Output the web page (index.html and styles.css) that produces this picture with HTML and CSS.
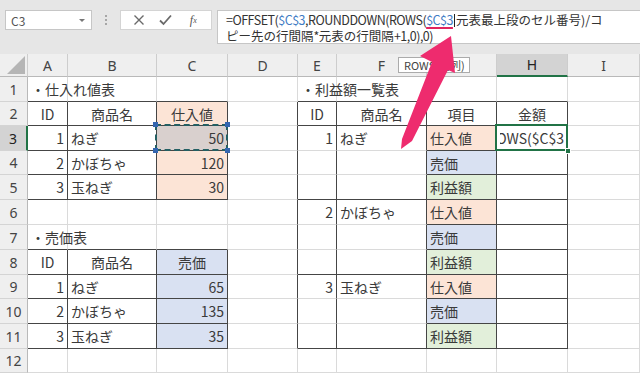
FILE: index.html
```html
<!DOCTYPE html>
<html lang="ja">
<head>
<meta charset="utf-8">
<title>Excel OFFSET</title>
<link rel="stylesheet" href="styles.css">
</head>
<body>
<div class="toolbar">
  <div class="namebox"><span>C3</span><span class="caret"></span></div>
  <div class="vdots"><i></i><i></i><i></i></div>
  <div class="fxbtns">
    <span class="btn">
      <svg width="12" height="12" viewBox="0 0 12 12"><path d="M1.5 1.5 L10.5 10.5 M10.5 1.5 L1.5 10.5" stroke="#6a6a6a" stroke-width="1.4" fill="none"/></svg>
    </span>
    <span class="btn">
      <svg width="13" height="12" viewBox="0 0 13 12"><path d="M1 6.5 L4.5 10 L12 1.5" stroke="#6a6a6a" stroke-width="1.8" fill="none"/></svg>
    </span>
    <span class="btn fx">f<sub>x</sub></span>
  </div>
  <div class="formula"><span class="lat">=OFFSET(<span class="ref">$C$3</span>,ROUNDDOWN(ROWS(<span class="ref uline">$C$3</span></span><span class="cursor"></span>元表最上段のセル番号)/コ<br>ピー先の行間隔<span class="lat">*</span>元表の行間隔<span class="lat">+1,0),0)</span></div>
</div>

<div class="sheet">
  <div class="ch corner"><span class="tri"></span></div>
  <div class="ch">A</div><div class="ch">B</div><div class="ch">C</div><div class="ch">D</div><div class="ch">E</div><div class="ch">F</div><div class="ch">G</div><div class="ch sel">H</div><div class="ch">I</div>

  <div class="rh">1</div>
  <div class="c db">・仕入れ値表</div><div class="c db"></div><div class="c db"></div><div class="c"></div>
  <div class="c db">・利益額一覧表</div><div class="c db"></div><div class="c db"></div><div class="c db"></div><div class="c"></div>

  <div class="rh">2</div>
  <div class="c ctr dr db">ID</div><div class="c ctr dr db">商品名</div><div class="c ctr or dr db">仕入値</div><div class="c dr"></div>
  <div class="c ctr dr db">ID</div><div class="c ctr dr db">商品名</div><div class="c ctr dr db">項目</div><div class="c ctr dr db">金額</div><div class="c"></div>

  <div class="rh selr">3</div>
  <div class="c r dr db">1</div><div class="c dr db">ねぎ</div>
  <div class="c r dr db copy">50<span class="h tl"></span><span class="h tr"></span><span class="h bl2"></span><span class="h br"></span></div>
  <div class="c dr"></div>
  <div class="c r dr">1</div><div class="c dr">ねぎ</div><div class="c or dr db">仕入値</div>
  <div class="c dr db active"><span class="clip">ROUNDDOWN(ROWS($C$3</span><span class="fill"></span></div><div class="c"></div>

  <div class="rh">4</div>
  <div class="c r dr db">2</div><div class="c dr db">かぼちゃ</div><div class="c r or dr db">120</div><div class="c dr"></div>
  <div class="c dr"></div><div class="c dr"></div><div class="c bl dr db">売価</div><div class="c dr db"></div><div class="c"></div>

  <div class="rh">5</div>
  <div class="c r dr db">3</div><div class="c dr db">玉ねぎ</div><div class="c r or dr db">30</div><div class="c dr"></div>
  <div class="c dr db"></div><div class="c dr db"></div><div class="c gr dr db">利益額</div><div class="c dr db"></div><div class="c"></div>

  <div class="rh">6</div>
  <div class="c"></div><div class="c"></div><div class="c"></div><div class="c dr"></div>
  <div class="c r dr">2</div><div class="c dr">かぼちゃ</div><div class="c or dr db">仕入値</div><div class="c dr db"></div><div class="c"></div>

  <div class="rh">7</div>
  <div class="c db">・売価表</div><div class="c db"></div><div class="c db"></div><div class="c dr"></div>
  <div class="c dr"></div><div class="c dr"></div><div class="c bl dr db">売価</div><div class="c dr db"></div><div class="c"></div>

  <div class="rh">8</div>
  <div class="c ctr dr db">ID</div><div class="c ctr dr db">商品名</div><div class="c ctr bl dr db">売価</div><div class="c dr"></div>
  <div class="c dr db"></div><div class="c dr db"></div><div class="c gr dr db">利益額</div><div class="c dr db"></div><div class="c"></div>

  <div class="rh">9</div>
  <div class="c r dr db">1</div><div class="c dr db">ねぎ</div><div class="c r bl dr db">65</div><div class="c dr"></div>
  <div class="c r dr">3</div><div class="c dr">玉ねぎ</div><div class="c or dr db">仕入値</div><div class="c dr db"></div><div class="c"></div>

  <div class="rh">10</div>
  <div class="c r dr db">2</div><div class="c dr db">かぼちゃ</div><div class="c r bl dr db">135</div><div class="c dr"></div>
  <div class="c dr"></div><div class="c dr"></div><div class="c bl dr db">売価</div><div class="c dr db"></div><div class="c"></div>

  <div class="rh">11</div>
  <div class="c r dr db">3</div><div class="c dr db">玉ねぎ</div><div class="c r bl dr db">35</div><div class="c dr"></div>
  <div class="c dr db"></div><div class="c dr db"></div><div class="c gr dr db">利益額</div><div class="c dr db"></div><div class="c"></div>

  <div class="rh">12</div>
  <div class="c"></div><div class="c"></div><div class="c"></div><div class="c"></div>
  <div class="c"></div><div class="c"></div><div class="c"></div><div class="c"></div><div class="c"></div>
</div>

<div class="tooltip">ROWS(配列)</div>

<svg class="arrow" width="640" height="373" viewBox="0 0 640 373">
  <polygon points="451,36 455,73 448,70 412,141 401,149 402,139 432,62 420,56" fill="#ee2b6e"/>
</svg>
</body>
</html>
```

FILE: styles.css
```css
* { box-sizing: border-box; margin: 0; padding: 0; }
html, body { width: 640px; height: 373px; overflow: hidden; }
body {
  background: #e6e6e6;
  font-family: "Noto Sans CJK JP", "Noto Sans", sans-serif;
  color: #333;
  position: relative;
}

/* formula toolbar */
.toolbar {
  height: 54px;
  display: flex;
  align-items: flex-start;
  padding: 10px 0 0 5px;
}
.namebox {
  width: 87px;
  height: 20px;
  background: #fff;
  border: 1px solid #c6c6c6;
  display: flex;
  align-items: center;
  justify-content: space-between;
  padding: 0 6px 0 5px;
  font-size: 12px;
  color: #555;
}
.caret {
  width: 0; height: 0;
  border-left: 3px solid transparent;
  border-right: 3px solid transparent;
  border-top: 3px solid #777;
}
.vdots {
  width: 28px;
  height: 20px;
  display: flex;
  flex-direction: column;
  align-items: center;
  justify-content: center;
  gap: 2px;
}
.vdots i { width: 2px; height: 2px; background: #a6a6a6; display: block; }
.fxbtns {
  width: 92px;
  height: 20px;
  background: #fff;
  border: 1px solid #d4d4d4;
  display: flex;
  align-items: center;
  justify-content: space-around;
  padding: 0 4px;
}
.btn { display: flex; align-items: center; justify-content: center; width: 24px; }
.fx { font-family: "Liberation Serif", serif; font-style: italic; font-size: 12px; color: #555; }
.fx sub { font-size: 8px; vertical-align: -1px; }
.formula {
  margin-left: 5px;
  flex: 1;
  height: 34px;
  background: #fff;
  border: 1px solid #c6c6c6;
  border-right: none;
  font-size: 12.5px;
  line-height: 16px;
  padding: 1px 0 0 8px;
  white-space: nowrap;
  color: #333;
}
.lat { letter-spacing: -0.5px; }
.ref { color: #3f7cc4; }
.uline {
  text-decoration: underline;
  text-decoration-color: #e0245e;
  text-decoration-thickness: 2px;
  text-underline-offset: 2px;
}
.cursor {
  display: inline-block;
  width: 1px;
  height: 13px;
  margin: 0 1px;
  background: #222;
  vertical-align: -2px;
}

/* sheet grid */
.sheet {
  display: grid;
  grid-template-columns: 28px 40px 89px 71px 70px 39px 90px 70px 71px 72px;
  grid-template-rows: 23px 25px 24px 25px 24px 25px 25px 25px 25px 24px 25px 25px 24px;
  background: #fff;
}
.ch, .rh {
  background: #efefef;
  color: #444;
  font-family: "Noto Sans", sans-serif;
  font-size: 14px;
  display: flex;
  align-items: center;
  justify-content: center;
}
.ch { border-right: 1px solid #cdcdcd; border-bottom: 1px solid #b9b9b9; }
.rh { border-right: 1px solid #b9b9b9; border-bottom: 1px solid #d4d4d4; }
.corner { justify-content: flex-end; align-items: flex-end; padding: 0 2px 2px 0; }
.tri {
  width: 0; height: 0;
  border-left: 18px solid transparent;
  border-bottom: 18px solid #b5b5b5;
}
.sel { background: #d3d3d3; border-bottom: 2px solid #217346; color: #222; }
.selr { background: #d3d3d3; border-right: 2px solid #217346; color: #222; }

.c {
  position: relative;
  border-right: 1px solid #dadada;
  border-bottom: 1px solid #dadada;
  font-size: 14px;
  display: flex;
  align-items: center;
  padding: 0 3px;
  white-space: nowrap;
  color: #3a3a3a;
}
.r { justify-content: flex-end; }
.ctr { justify-content: center; }
.dr { border-right-color: #454545; }
.db { border-bottom-color: #454545; }
.or { background: #fce4d6; }
.bl { background: #d9e1f2; }
.gr { background: #e2efda; }

/* copy (marching ants) cell */
.copy { background: #d9d0ce; }
.copy::after {
  content: "";
  position: absolute;
  top: -2px; left: -2px; right: -1px; bottom: -1px;
  border: 2px dashed #245f63;
}
.h {
  position: absolute;
  width: 5px; height: 5px;
  background: #3466b0;
  z-index: 2;
}
.tl { top: -4px; left: -4px; }
.tr { top: -4px; right: -3px; }
.bl2 { bottom: -3px; left: -4px; }
.br { bottom: -3px; right: -3px; }

/* active cell */
.active::after {
  content: "";
  position: absolute;
  top: -2px; left: -2px; right: -1px; bottom: -1px;
  border: 2px solid #217346;
}
.clip {
  display: flex;
  justify-content: flex-end;
  width: 100%;
  overflow: hidden;
}
.fill {
  position: absolute;
  right: -4px; bottom: -4px;
  width: 6px; height: 6px;
  background: #217346;
  border: 1px solid #fff;
  z-index: 2;
}

/* overlays */
.tooltip {
  position: absolute;
  left: 398px;
  top: 57px;
  width: 72px;
  height: 16px;
  background: #fff;
  border: 1px solid #ababab;
  font-size: 11px;
  line-height: 14px;
  padding-left: 5px;
  color: #444;
  white-space: nowrap;
}
.arrow {
  position: absolute;
  left: 0; top: 0;
  pointer-events: none;
}
```
